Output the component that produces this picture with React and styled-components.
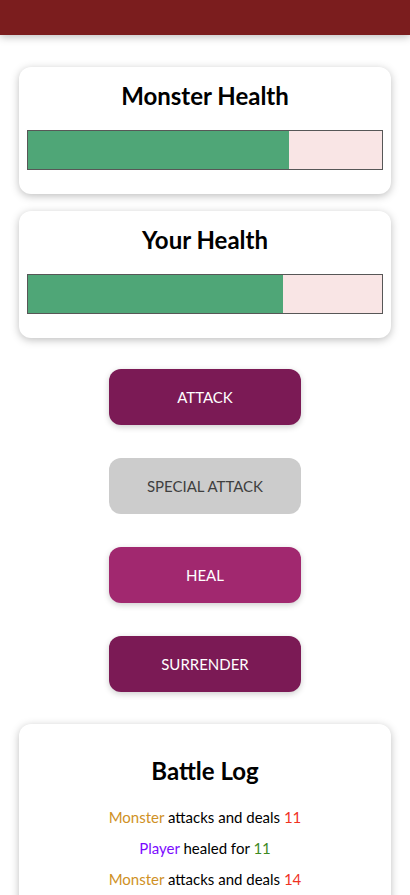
import React from 'react';
import styled, { createGlobalStyle } from 'styled-components';

const GlobalStyle = createGlobalStyle`
  * {
    box-sizing: border-box;
  }
  html, body {
    margin: 0;
    padding: 0;
    background: #fff;
    font-family: Lato, "Noto Sans", sans-serif;
    overflow: hidden;
  }
`;

const Header = styled.header`
  margin-top: -45px;
  height: 80px;
  background-color: #7b1d1e;
  color: #fff;
  box-shadow: 0 2px 8px rgba(0, 0, 0, 0.26);
  display: flex;
  align-items: flex-start;
  justify-content: center;
  overflow: hidden;
`;

const HeaderTitle = styled.h1`
  margin: 0;
  font-size: 32px;
  line-height: 40px;
`;

const Main = styled.main`
  display: flex;
  flex-direction: column;
  align-items: center;
  padding-top: 32px;
`;

const Card = styled.section`
  width: 372px;
  background: #fff;
  border-radius: 12px;
  box-shadow: 0 2px 8px rgba(0, 0, 0, 0.26);
  padding: ${(p) => p.$padding || '13px 8px 24px'};
  margin-bottom: ${(p) => p.$gap || '17px'};
  text-align: center;
`;

const CardTitle = styled.h2`
  margin: 0 0 ${(p) => p.$space || '18px'};
  font-size: 24px;
  line-height: 32px;
  font-weight: 700;
  color: #000;
`;

const Bar = styled.div`
  height: 40px;
  border: 1px solid #575757;
  background: #f9e5e5;
`;

const BarValue = styled.div`
  height: 100%;
  background: #4fa677;
`;

const Controls = styled.div`
  display: flex;
  flex-direction: column;
  align-items: center;
  gap: 33px;
  margin-top: 31px;
  margin-bottom: 32px;
`;

const ActionButton = styled.button`
  width: 192px;
  height: 56px;
  border: none;
  border-radius: 12px;
  font-family: Lato, "Noto Sans", sans-serif;
  font-size: 15px;
  text-transform: uppercase;
  color: ${(p) => (p.$variant === 'disabled' ? '#3f3f3f' : '#fff')};
  background: ${(p) =>
    p.$variant === 'disabled' ? '#cccccc' : p.$variant === 'heal' ? '#a1286f' : '#7b1a55'};
  box-shadow: ${(p) => (p.$variant === 'disabled' ? 'none' : '0 2px 6px rgba(0, 0, 0, 0.2)')};
`;

const LogList = styled.ul`
  list-style: none;
  margin: 0;
  padding: 0;
`;

const LogItem = styled.li`
  font-size: 15px;
  line-height: 31px;
  color: #000;
`;

const Who = styled.span`
  color: ${(p) => (p.$who === 'player' ? '#7c0aff' : '#cf9125')};
`;

const Amount = styled.span`
  color: ${(p) => (p.$kind === 'heal' ? '#3e8a1f' : '#f0321f')};
`;

const logs = [
  { who: 'monster', text: 'attacks and deals', value: 11, kind: 'damage' },
  { who: 'player', text: 'healed for', value: 11, kind: 'heal' },
  { who: 'monster', text: 'attacks and deals', value: 14, kind: 'damage' },
];

const App = () => {
  return (
    <>
      <GlobalStyle />
      <Header>
        <HeaderTitle>Monster Slayer</HeaderTitle>
      </Header>
      <Main>
        <Card>
          <CardTitle>Monster Health</CardTitle>
          <Bar>
            <BarValue style={{ width: '73.8%' }} />
          </Bar>
        </Card>
        <Card $gap="0">
          <CardTitle>Your Health</CardTitle>
          <Bar>
            <BarValue style={{ width: '72%' }} />
          </Bar>
        </Card>
        <Controls>
          <ActionButton>Attack</ActionButton>
          <ActionButton $variant="disabled" disabled>
            Special Attack
          </ActionButton>
          <ActionButton $variant="heal">Heal</ActionButton>
          <ActionButton>Surrender</ActionButton>
        </Controls>
        <Card $padding="31px 8px 24px">
          <CardTitle $space="15px">Battle Log</CardTitle>
          <LogList>
            {logs.map((log, i) => (
              <LogItem key={i}>
                <Who $who={log.who}>{log.who === 'player' ? 'Player' : 'Monster'}</Who> {log.text}{' '}
                <Amount $kind={log.kind}>{log.value}</Amount>
              </LogItem>
            ))}
          </LogList>
        </Card>
      </Main>
    </>
  );
};

export default App;
